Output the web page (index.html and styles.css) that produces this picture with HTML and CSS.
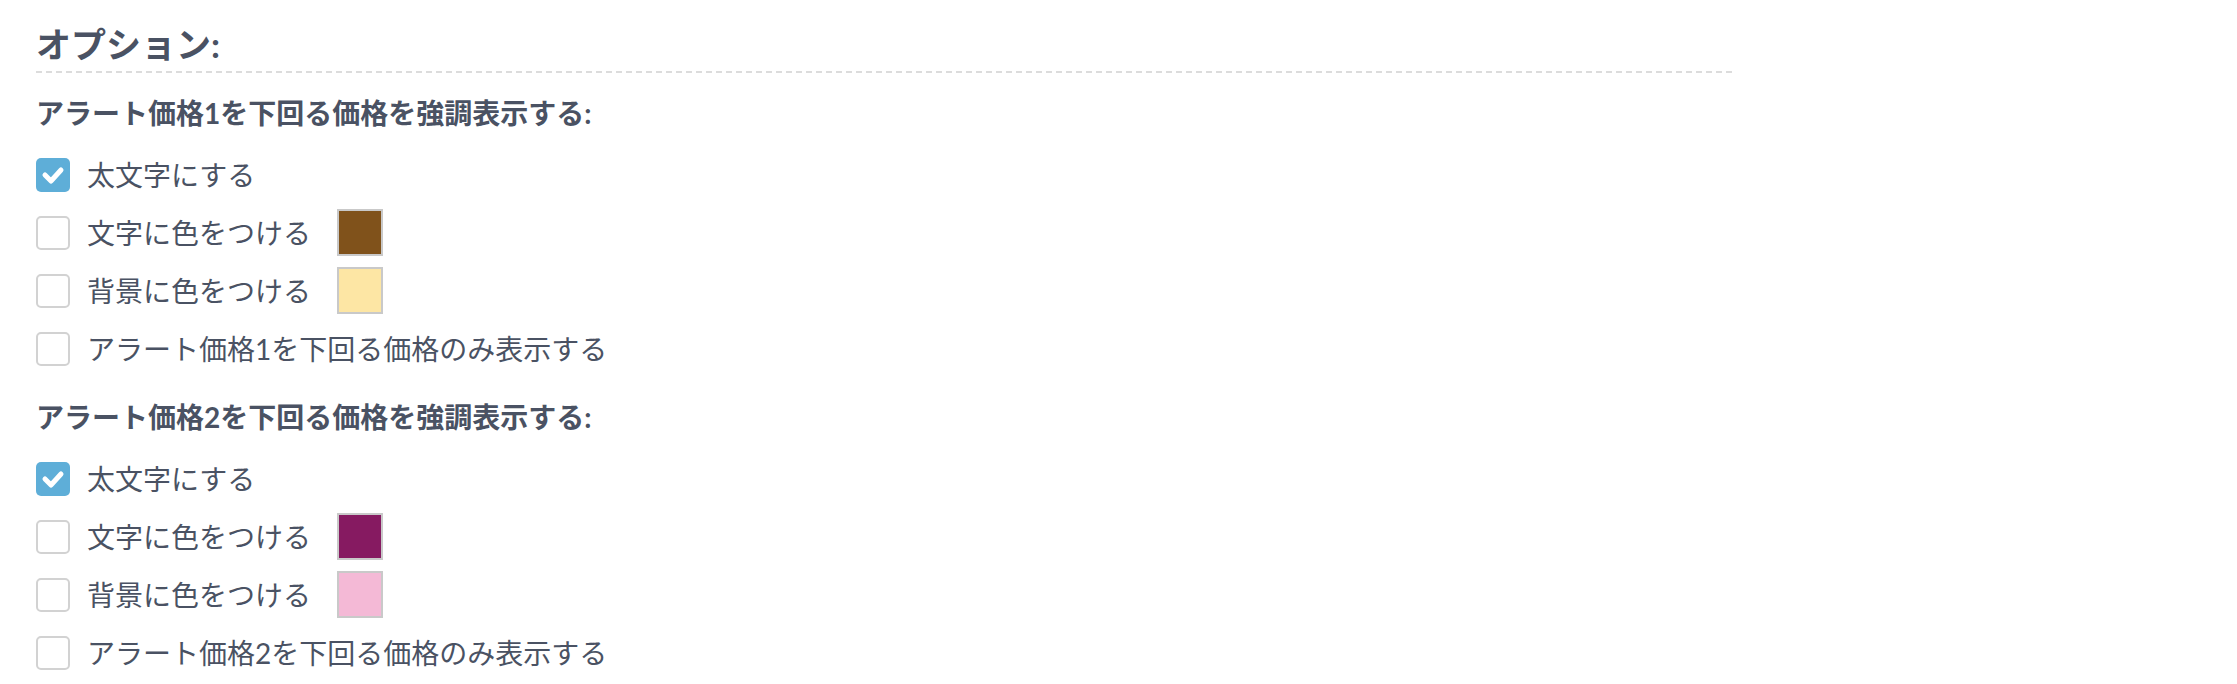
FILE: index.html
```html
<!DOCTYPE html>
<html lang="ja">
<head>
<meta charset="utf-8">
<title>オプション</title>
<link rel="stylesheet" href="styles.css">
</head>
<body>
<div class="panel">
  <h2 class="title">オプション:</h2>
  <div class="rule"></div>

  <section class="group">
    <h3 class="group-title">アラート価格1を下回る価格を強調表示する:</h3>
    <div class="rows">
      <label class="row"><span class="box checked"><svg viewBox="0 0 34 34" width="34" height="34"><polyline points="9,17 15,23 25,12" fill="none" stroke="#fff" stroke-width="5" stroke-linecap="round" stroke-linejoin="round"/></svg></span><span class="text">太文字にする</span></label>
      <label class="row"><span class="box"></span><span class="text">文字に色をつける</span><span class="swatch brown"></span></label>
      <label class="row"><span class="box"></span><span class="text">背景に色をつける</span><span class="swatch yellow"></span></label>
      <label class="row"><span class="box"></span><span class="text">アラート価格1を下回る価格のみ表示する</span></label>
    </div>
  </section>

  <section class="group">
    <h3 class="group-title">アラート価格2を下回る価格を強調表示する:</h3>
    <div class="rows">
      <label class="row"><span class="box checked"><svg viewBox="0 0 34 34" width="34" height="34"><polyline points="9,17 15,23 25,12" fill="none" stroke="#fff" stroke-width="5" stroke-linecap="round" stroke-linejoin="round"/></svg></span><span class="text">太文字にする</span></label>
      <label class="row"><span class="box"></span><span class="text">文字に色をつける</span><span class="swatch purple"></span></label>
      <label class="row"><span class="box"></span><span class="text">背景に色をつける</span><span class="swatch pink"></span></label>
      <label class="row"><span class="box"></span><span class="text">アラート価格2を下回る価格のみ表示する</span></label>
    </div>
  </section>
</div>
</body>
</html>
```

FILE: styles.css
```css
html, body {
  margin: 0;
  padding: 0;
  background: #ffffff;
}

body {
  font-family: Lato, "Noto Sans CJK JP", sans-serif;
  color: #4a5263;
}

.panel {
  width: 1699px;
  padding: 24px 0 0 36px;
}

.title {
  margin: 0;
  font-size: 35px;
  line-height: 40px;
  font-weight: 700;
  padding-bottom: 7px;
}

.rule {
  height: 2px;
  background: repeating-linear-gradient(to right, #dcdcdc 0 6px, transparent 6px 10px);
}

.group {
  margin-top: 20px;
}

.group + .group {
  margin-top: 25px;
}

.group-title {
  margin: 0;
  font-size: 28px;
  line-height: 40px;
  font-weight: 700;
}

.rows {
  display: flex;
  flex-direction: column;
  gap: 11px;
  margin-top: 18px;
}

.row {
  display: flex;
  align-items: center;
  min-height: 47px;
  font-size: 28px;
  line-height: 40px;
}

.box {
  box-sizing: border-box;
  width: 34px;
  height: 34px;
  border: 2px solid #d2d2d2;
  border-radius: 5px;
  background: #ffffff;
  margin-right: 17px;
  flex: none;
  display: flex;
}

.box.checked {
  border: none;
  background: #5eaed8;
}

.text {
  font-weight: 400;
}

.swatch {
  box-sizing: border-box;
  width: 46px;
  height: 47px;
  border: 2px solid #c9c9c9;
  margin-left: 26px;
  flex: none;
}

.brown { background: #80521b; }
.yellow { background: #fde6a4; }
.purple { background: #861a61; }
.pink { background: #f4b9d6; }
```
